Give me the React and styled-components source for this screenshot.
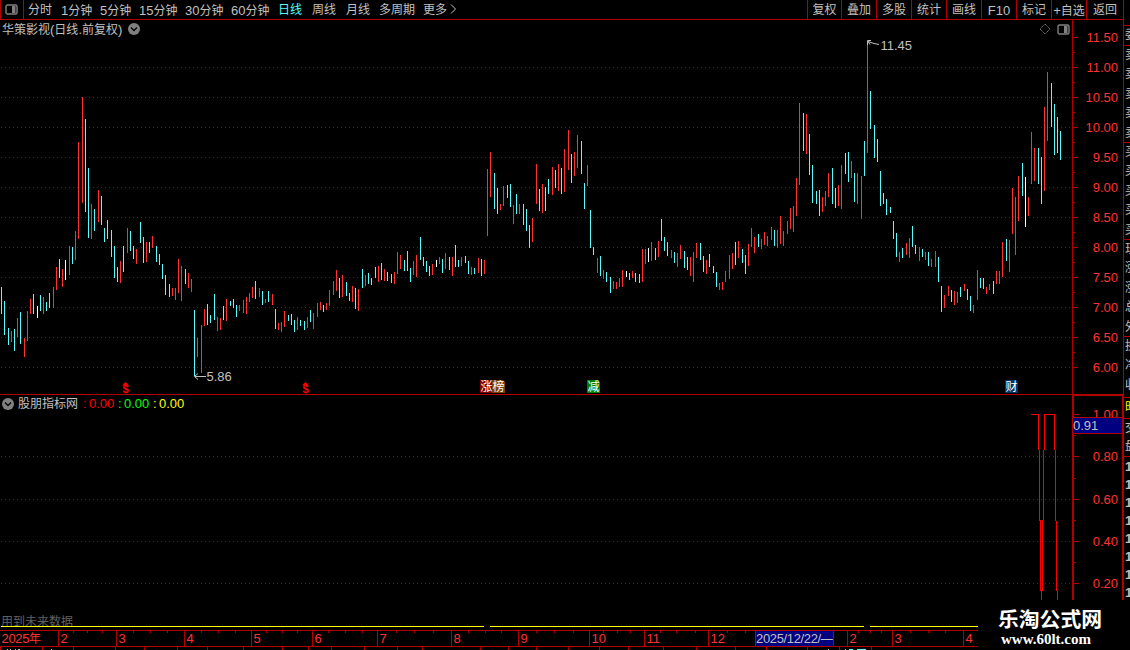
import React from 'react';
import styled, { createGlobalStyle } from 'styled-components';

const LINE = '#b00000';
const RED = '#ff3232';
const CYAN = '#54fcfc';
const GRAY = '#c0c0c0';
const FONT = '"Liberation Sans", "Noto Sans CJK SC", sans-serif';

const GlobalStyle = createGlobalStyle`
  * {
    box-sizing: border-box;
  }

  body {
    margin: 0;
    background: #000;
    overflow: hidden;
    font-family: ${FONT};
    font-size: 12px;
    color: ${GRAY};
  }

  svg {
    display: block;
    flex: none;
  }
`;

const Screen = styled.div`
  width: 1130px;
  height: 650px;
  background: #000;
  overflow: hidden;
`;

const Body = styled.div`
  display: flex;
  height: 600px;
`;

const Main = styled.main`
  width: 1123px;
  flex: none;
`;

const Toolbar = styled.div`
  display: flex;
  height: 20px;
  border-bottom: 1px solid ${LINE};
  line-height: 21px;
  white-space: nowrap;
`;

const PanelToggle = styled.button`
  width: 24px;
  height: 19px;
  padding: 0 0 1px 4px;
  background: none;
  border: 0 solid ${LINE};
  border-width: 0 1px;
`;

const Periods = styled.div`
  display: flex;
  flex: 1;
  padding-left: 4px;
`;

const Period = styled.span`
  width: ${props => props.$width}px;
  height: 19px;
  color: ${props => (props.$active ? CYAN : GRAY)};
  display: flex;

  svg {
    margin-top: 3px;
  }
`;

const Tool = styled.span`
  width: ${props => props.$width || 35}px;
  height: 19px;
  border-left: 1px solid ${LINE};
  text-align: center;
`;

const Latin = styled.span`
  font-size: 13px;
`;

const Row = styled.div`
  display: flex;
`;

const Plot = styled.section`
  width: 1072px;
  height: ${props => props.$height}px;
  flex: none;
`;

const PlotTitle = styled.div`
  display: flex;
  align-items: center;
  height: 20px;
  padding: 0 2px 2px 2px;
  line-height: 18px;
  white-space: nowrap;

  span {
    padding-top: 1px;
  }

  svg {
    margin-left: 6px;
  }
`;

const Spacer = styled.div`
  flex: 1;
`;

const PriceAxis = styled.div`
  display: flex;
  width: 51px;
  border-left: 1px solid ${LINE};
`;

const PriceLabels = styled.div`
  flex: 1;
  padding: 2px 5px 0 0;
  text-align: right;
  color: ${RED};
  font-size: 13px;

  div {
    height: 30px;
    line-height: 31px;
  }
`;

const IndicatorPlot = styled(Plot)`
  border-top: 1px solid ${LINE};
`;

const IndicatorTitle = styled.div`
  display: flex;
  align-items: center;
  height: 17px;
  padding-left: 2px;
  line-height: 17px;
  white-space: nowrap;
`;

const IndicatorName = styled.span`
  margin-left: 4px;
  padding-top: 1px;
  width: 65px;
`;

const Value = styled.span`
  width: 35px;
  font-size: 13px;
  color: ${props => props.$color};

  i {
    display: inline-block;
    width: 6px;
    font-style: normal;
  }
`;

const IndicatorAxis = styled.div`
  position: relative;
  display: flex;
  width: 51px;
  height: 206px;
  border: 2px solid ${LINE};
  border-width: 2px 1px 0 2px;
`;

const IndicatorLabels = styled.div`
  flex: 1;
  padding: 0 4px 0 0;
  text-align: right;
  color: ${RED};
  font-size: 13px;

  div {
    height: 42.3px;
    line-height: 38px;
  }
`;

const CursorValue = styled.div`
  position: absolute;
  left: -1px;
  right: 0;
  top: 21px;
  height: 17px;
  border: 1px solid ${LINE};
  border-width: 1px 0;
  background: #000080;
  font-size: 13px;
  line-height: 15px;
`;

const Quote = styled.aside`
  width: 7px;
  border-left: 1px solid ${LINE};
  overflow: hidden;
`;

const QuoteBlock = styled.div`
  height: ${props => props.$height}px;
  padding-left: 1px;
  border-bottom: 1px solid ${LINE};
  color: ${props => props.$color || GRAY};
  overflow: hidden;

  div {
    width: 14px;
    height: ${props => props.$row || 19.4}px;
    line-height: ${props => props.$row || 19.4}px;
  }
`;

const Trades = styled.div`
  padding: 1px 0 0 1px;
  font-size: 13px;
  font-weight: bold;

  div {
    height: 18px;
    line-height: 18px;
  }
`;

const Footer = styled.footer`
  display: flex;
  height: 50px;
`;

const Timeline = styled.div`
  width: 978px;
  flex: none;
`;

const Notice = styled.div`
  position: relative;
  height: 30px;
  padding: 15px 0 0 1px;
  line-height: 15px;
  color: #606060;

  svg {
    position: absolute;
    left: 0;
    top: 26px;
  }
`;

const Months = styled.div`
  position: relative;
  display: flex;
  height: 17px;
  border: 1px solid ${LINE};
  border-width: 1px 0;
  color: ${RED};
  line-height: 16px;
  white-space: nowrap;

  svg {
    position: absolute;
    left: 0;
    top: 0;
  }
`;

const Month = styled.div`
  width: ${props => props.$width}px;
  flex: none;
  padding-left: ${props => (props.$cursor ? 0 : 1.5)}px;
  border-left: ${props => (props.$first ? 0 : 1)}px solid ${LINE};
  background: ${props => (props.$cursor ? '#000080' : 'none')};
  color: ${props => (props.$cursor ? GRAY : RED)};
  letter-spacing: ${props => (props.$cursor || props.$first ? -0.35 : 0)}px;
`;

const Brand = styled.div`
  flex: 1;
  padding: 6px 0 0 20px;
  color: #fff;
  white-space: nowrap;
`;

const BrandName = styled.div`
  font-family: "Noto Sans CJK SC", sans-serif;
  font-size: 20.8px;
  font-weight: bold;
  line-height: 24px;
`;

const BrandUrl = styled.div`
  margin-top: 2px;
  padding-left: 3px;
  font-family: "Liberation Serif", serif;
  font-size: 15px;
  font-weight: bold;
  line-height: 15px;
`;

const periods = [
  ['分时', 33], ['1分钟', 39], ['5分钟', 39], ['15分钟', 46], ['30分钟', 46], ['60分钟', 47],
  ['日线', 34], ['周线', 34], ['月线', 33], ['多周期', 44], ['更多', 40],
];

const tools = [
  ['复权', 34], ['叠加'], ['多股'], ['统计'], ['画线'], ['F10'], ['标记'], ['+自选'], ['返回', 37],
];

const prices = ['11.50', '11.00', '10.50', '10.00', '9.50', '9.00', '8.50', '8.00', '7.50', '7.00', '6.50', '6.00'];

const months = [
  ['2025年', 58], ['2', 58], ['3', 68], ['4', 67], ['5', 61], ['6', 65], ['7', 74], ['8', 67], ['9', 71],
  ['10', 55], ['11', 64], ['12', 47], ['2025/12/22/—', 78], ['', 14], ['2', 45], ['3', 71], ['4', 15],
];

const minorTicks = [
  73, 87, 102, 133, 150, 167, 201, 218, 235, 266, 282, 297, 328, 345, 362, 396, 414, 433, 468, 485, 501,
  536, 554, 573, 603, 617, 630, 660, 676, 695, 727, 745, 858, 870, 881, 910, 928, 945,
];

const lowerTicks = [
  0, 42, 73, 115, 144, 177, 207, 243, 282, 308, 331, 364, 397, 422, 480, 508, 536, 568, 599, 628, 663, 696,
  735, 766, 807, 839, 871,
];

// x, high, low, kind: r = up, c = down, w = unchanged
const bars = `
1 287 314 c|4 301 335 c|8 328 345 c|11 331 342 r|14 329 351 c|17 318 337 r|20 312 344 c|24 338 357 r
27 311 341 r|30 299 314 r|33 294 314 c|37 306 318 w|40 295 311 c|43 297 314 r|46 302 311 c|49 293 308 c
53 287 308 r|56 267 290 r|59 259 278 c|62 269 287 r|65 260 280 w|69 246 275 r|72 247 264 c|75 231 260 r
78 142 239 r|82 97 203 r|85 119 212 c|88 168 238 c|91 204 239 r|94 209 231 c|98 190 222 r|101 196 225 c
104 228 242 c|107 220 239 c|111 230 257 c|114 246 278 c|117 267 282 c|120 261 283 r|123 246 272 c
127 228 253 r|130 231 251 c|133 246 259 c|136 249 264 r|140 222 243 c|143 237 263 c|146 242 262 r
149 242 253 c|152 236 248 r|156 246 262 c|159 254 265 c|162 264 279 c|165 275 295 c|169 284 297 c
172 288 296 r|175 288 300 r|178 259 293 r|181 266 301 r|185 269 284 c|188 273 288 r|191 279 292 r
194 310 376 c|197 338 357 r|201 325 373 r|204 309 326 r|207 304 325 c|210 315 323 c|214 294 320 c
217 317 331 r|220 318 330 r|223 306 320 c|226 299 321 r|230 301 306 c|233 299 308 c|236 305 317 c
239 305 311 r|243 300 313 r|246 297 314 r|249 293 302 r|252 287 298 r|255 281 299 c|259 288 297 r
262 291 305 c|265 299 303 r|268 291 302 c|272 294 305 r|275 309 329 c|278 323 330 r|281 322 332 r
284 311 327 r|288 315 321 c|291 314 325 c|294 320 332 c|297 317 330 r|300 320 326 c|304 321 330 c
307 317 328 r|310 310 322 c|313 313 329 r|317 303 317 r|320 302 310 r|323 305 312 c|326 303 310 r
329 290 306 r|333 281 295 r|336 270 291 r|339 278 298 c|342 275 297 r|346 282 296 c|349 293 301 c
352 286 302 r|355 288 309 c|358 289 311 r|362 269 288 c|365 275 286 r|368 273 284 c|371 278 285 c
375 267 278 c|378 266 282 r|381 263 280 c|384 269 281 r|387 272 281 c|391 274 283 c|394 272 284 r
397 252 274 r|400 255 269 r|404 260 271 c|407 251 271 c|410 268 282 c|413 261 275 r|416 255 277 r
420 237 260 c|423 257 266 c|426 261 272 c|429 266 276 c|432 264 275 r|436 260 267 w|439 257 264 r
442 259 273 c|445 253 269 r|449 257 270 c|452 257 276 r|455 245 267 c|458 260 267 c|461 257 266 r
465 256 263 c|468 261 274 c|471 267 275 r|474 268 274 c|478 258 273 r|481 259 276 c|484 260 274 r
487 169 236 r|490 152 197 r|494 173 209 c|497 188 214 c|500 204 210 r|503 186 206 r|507 185 198 c
510 184 207 c|513 205 224 r|516 194 214 c|519 204 214 r|523 204 225 c|526 209 231 c|529 225 248 c
532 218 242 r|536 164 204 r|539 189 211 c|542 184 213 r|545 187 211 c|548 179 194 c|552 167 195 r
555 170 188 c|558 164 191 r|561 168 194 c|564 149 192 r|568 130 170 r|571 154 183 c|574 152 176 r
577 135 168 r|581 141 174 c|584 183 209 c|587 165 186 r|590 210 248 c|593 247 255 c|597 258 273 r
600 256 276 c|603 270 279 r|606 272 282 c|610 277 293 c|613 281 289 r|616 282 289 r|619 278 287 r
622 270 287 r|626 271 277 w|629 273 280 c|632 271 278 r|635 273 282 c|639 274 283 c|642 249 282 r
645 249 264 r|648 248 262 w|651 242 261 r|655 248 260 c|658 241 257 r|661 219 241 c|664 237 251 c
667 242 256 c|671 250 258 r|674 252 263 c|677 253 267 r|680 245 259 r|684 251 268 c|687 257 270 c
690 257 276 r|693 252 282 r|696 243 258 r|700 243 260 c|703 256 272 c|706 260 274 r|709 254 267 c
713 266 273 c|716 272 287 c|719 283 290 r|722 282 290 r|725 271 282 r|729 255 279 r|732 253 269 r
735 242 265 c|738 241 258 r|742 249 263 c|745 255 274 c|748 244 266 r|751 228 247 r|754 237 253 r
758 234 247 c|761 239 249 r|764 232 245 r|767 236 246 r|771 227 240 r|774 230 246 c|777 230 248 r
780 216 244 r|783 231 246 r|787 221 234 r|790 208 229 r|793 206 232 r|796 178 216 r|799 103 185 r
803 113 151 c|806 114 154 r|809 134 175 c|812 165 203 c|816 191 204 c|819 190 216 c|822 197 212 r
825 191 206 r|828 173 197 r|832 168 204 c|835 188 208 c|838 185 206 r|841 165 209 r|845 153 174 c
848 152 182 c|851 161 178 r|854 173 202 c|857 173 204 r|861 176 219 r|864 141 176 c|867 43 153 r
870 91 129 c|874 125 158 c|877 139 162 c|880 171 206 c|883 193 204 c|886 199 215 c|890 207 213 c
893 221 239 c|896 233 257 c|899 252 262 r|902 248 258 c|906 243 255 r|909 238 258 r|912 226 247 c
915 245 254 c|919 247 261 r|922 249 257 c|925 252 260 r|928 252 266 c|931 259 267 r|935 251 267 r
938 257 282 c|941 286 312 c|944 295 308 r|948 286 296 r|951 290 302 c|954 291 305 r|957 292 303 r
960 287 297 c|964 284 291 r|967 289 300 c|970 296 311 c|973 305 313 r|977 270 300 r|980 278 288 c
983 278 289 c|986 287 294 r|989 284 290 r|993 281 294 c|996 271 284 r|999 271 284 r|1002 242 277 r
1006 239 261 c|1009 240 272 r|1012 188 234 r|1015 197 255 r|1018 176 221 r|1022 163 196 c
1025 177 227 w|1028 197 216 r|1031 132 184 r|1034 148 181 r|1038 148 184 c|1041 157 204 c
1044 107 191 r|1047 72 141 r|1051 83 127 c|1054 104 155 c|1057 117 153 c|1060 131 160 c
`.trim().split(/[|\n]/).map(item => item.split(' '));

const barColors = { r: RED, c: CYAN, w: '#ffffff' };

// Digits and latin letters run one size larger than the Chinese text around them
function Mixed({ text }) {
  return text.split(/([!-~]+)/).map((part, i) => (i % 2 ? <Latin key={i}>{part}</Latin> : part));
}

function PanelIcon() {
  return (
    <svg width="13" height="11" viewBox="0 0 13 11">
      <rect x="1" y="1" width="11" height="9" rx="1.5" fill="none" stroke="#808080" strokeWidth="1.4" />
      <rect x="7" y="2" width="3.5" height="7" fill="#808080" />
    </svg>
  );
}

function DropIcon() {
  return (
    <svg width="12" height="12" viewBox="0 0 12 12">
      <circle cx="6" cy="6" r="6" fill="#808080" />
      <path d="M3 4.5 L6 7.5 L9 4.5" fill="none" stroke="#000" strokeWidth="1.3" />
    </svg>
  );
}

// One lit pixel out of four, drawn as squares so every row lands on whole pixels
function GridLines({ rows }) {
  return rows.map(y => (
    <path key={y} d={`M1 ${y + 0.5}H1070`} stroke="#801010" strokeDasharray="1 3" />
  ));
}

function Dividend({ x }) {
  return (
    <g fill="#ff0000">
      <path d={`M${x - 3} 385.5 L${x + 0.5} 382 L${x + 4} 385.5Z`} />
      <text x={x + 0.5} y="393" fontSize="11" fontWeight="bold" textAnchor="middle">$</text>
    </g>
  );
}

function Badge({ x, color, text }) {
  return (
    <g>
      <path d={`M${x} 380h11l2 2v11h-13z`} fill={color} />
      <text x={x + 0.5} y="391" fontSize="12" fill="#fff">{text}</text>
    </g>
  );
}

function PriceChart() {
  return (
    <svg width="1072" height="354" viewBox="0 40 1072 354" fontFamily={FONT}>
      <g shapeRendering="crispEdges">
        <GridLines rows={[67, 97, 127, 157, 187, 217, 247, 277, 307, 337, 367]} />
        {bars.map(([x, high, low, kind]) => (
          <rect key={x} x={x} y={high} width="1" height={low - high} fill={barColors[kind]} />
        ))}
      </g>
      <g fill="none" stroke={GRAY}>
        <path d="M879 44.5 L874 43.5 L868 41.5 M867.5 45V40.5H871 M868 41.5 L870 44.5" />
        <path d="M206 376.5H195 M198 373.5 L194.5 376.5 L198 379.5" />
      </g>
      <g fill={GRAY} fontSize="13">
        <text x="880.5" y="50">11.45</text>
        <text x="206.5" y="381">5.86</text>
      </g>
      <Dividend x={125} />
      <Dividend x={305} />
      <Badge x={480} color="#800000" text="涨" />
      <Badge x={492} color="#804000" text="榜" />
      <Badge x={587} color="#008000" text="减" />
      <Badge x={1005} color="#003366" text="财" />
    </svg>
  );
}

function IndicatorChart() {
  return (
    <svg width="1072" height="188" viewBox="0 412 1072 188" shapeRendering="crispEdges">
      <GridLines rows={[456, 499, 541, 583]} />
      <g fill="none" stroke="#ff0000">
        <path d="M1031 414.5H1038.5V450M1039.5 450V520.5M1040.5 520V591M1041.5 590V600" />
        <path d="M1042.5 591V520M1043.5 520V450M1044.5 450V414.5H1054.5V450M1055.5 450V521M1056.5 521V591M1057.5 591V600" />
      </g>
    </svg>
  );
}

function Ticks({ top, height, major, minor }) {
  return (
    <svg width="6" height={height} viewBox={`0 ${top} 6 ${height}`} shapeRendering="crispEdges">
      {major.map(y => <rect key={y} x="0" y={y} width="5" height="1" fill={LINE} />)}
      {minor.map(y => <rect key={y} x="0" y={y} width="2" height="1" fill={LINE} />)}
    </svg>
  );
}

function TopBar() {
  return (
    <Toolbar>
      <PanelToggle><PanelIcon /></PanelToggle>
      <Periods>
        {periods.map(([name, width]) => (
          <Period key={name} $width={width} $active={name === '日线'}>
            <span><Mixed text={name} /></span>
            {name === '更多' && (
              <svg width="10" height="12" viewBox="0 0 10 12">
                <path d="M4 1.5 L8.5 6 L4 10.5" fill="none" stroke={GRAY} />
              </svg>
            )}
          </Period>
        ))}
      </Periods>
      {tools.map(([name, width]) => (
        <Tool key={name} $width={width}><Mixed text={name} /></Tool>
      ))}
    </Toolbar>
  );
}

function PricePanel() {
  const major = prices.map((_, i) => 37 + i * 30);
  return (
    <Row>
      <Plot $height={374}>
        <PlotTitle>
          <span><Mixed text="华策影视(日线.前复权)" /></span>
          <DropIcon />
          <Spacer />
          <svg width="12" height="12" viewBox="0 0 12 12">
            <path d="M6 1 L11 6 L6 11 L1 6Z" fill="none" stroke="#808080" strokeDasharray="1.4 0.6" />
          </svg>
          <PanelIcon />
        </PlotTitle>
        <PriceChart />
      </Plot>
      <PriceAxis>
        <Ticks top={20} height={374} major={major} minor={major.slice(0, -1).map(y => y + 15)} />
        <PriceLabels>
          {prices.map(price => <div key={price}>{price}</div>)}
        </PriceLabels>
      </PriceAxis>
    </Row>
  );
}

function IndicatorPanel() {
  return (
    <Row>
      <IndicatorPlot $height={206}>
        <IndicatorTitle>
          <DropIcon />
          <IndicatorName>股朋指标网</IndicatorName>
          <Value $color="#ff0000"><i>:</i>0.00</Value>
          <Value $color="#00ff00"><i>:</i>0.00</Value>
          <Value $color="#ffff00"><i>:</i>0.00</Value>
        </IndicatorTitle>
        <IndicatorChart />
      </IndicatorPlot>
      <IndicatorAxis>
        <Ticks top={396} height={204} major={[414, 456, 499, 541, 583]} minor={[435, 478, 520, 562]} />
        <IndicatorLabels>
          {['1.00', '0.80', '0.60', '0.40', '0.20'].map(value => <div key={value}>{value}</div>)}
        </IndicatorLabels>
        <CursorValue>0.91</CursorValue>
      </IndicatorAxis>
    </Row>
  );
}

function QuoteStrip() {
  return (
    <Quote>
      <QuoteBlock $height={26} />
      <QuoteBlock $height={20}><div>委</div></QuoteBlock>
      <QuoteBlock $height={97}>{[1, 2, 3, 4, 5].map(n => <div key={n}>卖</div>)}</QuoteBlock>
      <QuoteBlock $height={97}>{[1, 2, 3, 4, 5].map(n => <div key={n}>买</div>)}</QuoteBlock>
      <QuoteBlock $height={97}><div>现</div><div>涨</div><div>涨</div><div>总</div><div>外</div></QuoteBlock>
      <QuoteBlock $height={61}><div>换</div><div>净</div><div>收</div></QuoteBlock>
      <QuoteBlock $height={21} $color="#ffff00"><div>时</div></QuoteBlock>
      <QuoteBlock $height={38} $row={18}><div>交</div><div>盘</div></QuoteBlock>
      <Trades>{[1, 2, 3, 4, 5, 6, 7, 8].map(n => <div key={n}>1</div>)}</Trades>
    </Quote>
  );
}

function TimeAxis() {
  return (
    <Timeline>
      <Notice>
        用到未来数据
        <svg width="978" height="1" shapeRendering="crispEdges">
          <path d="M1 0.5H484M490 0.5H864M870 0.5H978" stroke="#ffff00" />
        </svg>
      </Notice>
      <Months>
        {months.map(([name, width], i) => (
          <Month key={i} $width={width} $first={i === 0} $cursor={name.includes('/')}>
            <Mixed text={name} />
          </Month>
        ))}
        <svg width="978" height="2" shapeRendering="crispEdges">
          {minorTicks.map(x => <rect key={x} x={x} y="0" width="1" height="2" fill={LINE} />)}
        </svg>
      </Months>
      <svg width="978" height="3" shapeRendering="crispEdges">
        {lowerTicks.map(x => <rect key={x} x={x} y="0" width="1" height="3" fill={LINE} />)}
        <path d="M849 2.5h4M857 2.5h9" stroke={CYAN} />
        <path d="M7 2.5h1M10 2.5h1M15 2.5h1M18 2.5h2M51 2.5h1M828 2.5h1M845 2.5h1" stroke={GRAY} />
      </svg>
    </Timeline>
  );
}

function App() {
  return (
    <Screen>
      <GlobalStyle />
      <Body>
        <Main>
          <TopBar />
          <PricePanel />
          <IndicatorPanel />
        </Main>
        <QuoteStrip />
      </Body>
      <Footer>
        <TimeAxis />
        <Brand>
          <BrandName>乐淘公式网</BrandName>
          <BrandUrl>www.60lt.com</BrandUrl>
        </Brand>
      </Footer>
    </Screen>
  );
}

export default App;
